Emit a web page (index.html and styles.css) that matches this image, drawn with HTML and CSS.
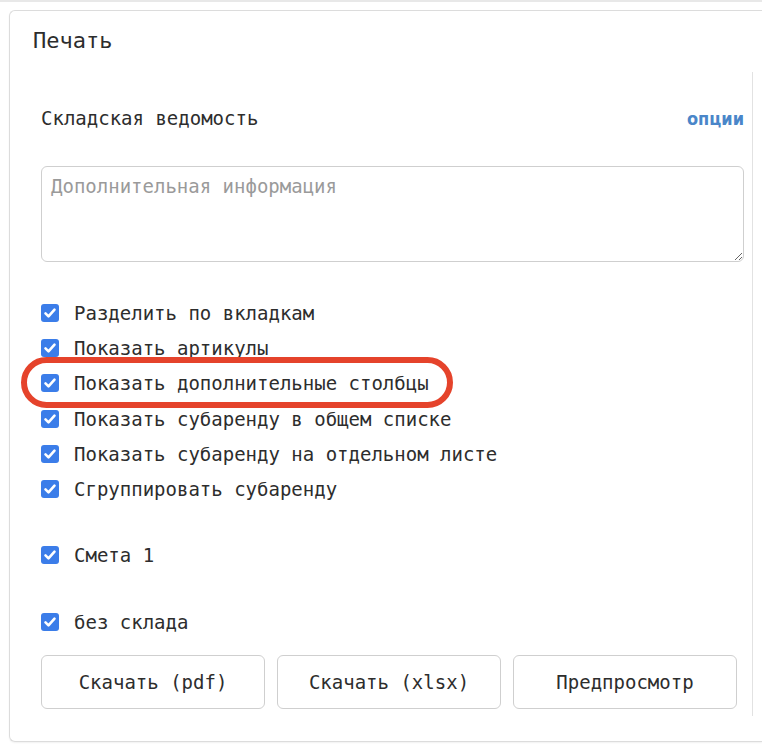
FILE: index.html
```html
<!DOCTYPE html>
<html lang="ru">
<head>
<meta charset="utf-8">
<link rel="stylesheet" href="styles.css">
</head>
<body>
<div class="prev"></div>
<section class="card">
  <h2 class="card-title">Печать</h2>
  <div class="col">
    <div class="doc-head">
      <span class="doc-name">Складская ведомость</span>
      <a class="opts">опции</a>
    </div>
    <textarea class="info" placeholder="Дополнительная информация"></textarea>
    <ul class="checks">
      <li><span class="cb"><svg viewBox="0 0 18 18"><path d="M4.5 9.3l3 3 6-6.6" /></svg></span>Разделить по вкладкам</li>
      <li><span class="cb"><svg viewBox="0 0 18 18"><path d="M4.5 9.3l3 3 6-6.6" /></svg></span>Показать артикулы</li>
      <li><span class="cb"><svg viewBox="0 0 18 18"><path d="M4.5 9.3l3 3 6-6.6" /></svg></span>Показать дополнительные столбцы</li>
      <li><span class="cb"><svg viewBox="0 0 18 18"><path d="M4.5 9.3l3 3 6-6.6" /></svg></span>Показать субаренду в общем списке</li>
      <li><span class="cb"><svg viewBox="0 0 18 18"><path d="M4.5 9.3l3 3 6-6.6" /></svg></span>Показать субаренду на отдельном листе</li>
      <li><span class="cb"><svg viewBox="0 0 18 18"><path d="M4.5 9.3l3 3 6-6.6" /></svg></span>Сгруппировать субаренду</li>
    </ul>
    <ul class="checks single">
      <li><span class="cb"><svg viewBox="0 0 18 18"><path d="M4.5 9.3l3 3 6-6.6" /></svg></span>Смета 1</li>
    </ul>
    <ul class="checks single">
      <li><span class="cb"><svg viewBox="0 0 18 18"><path d="M4.5 9.3l3 3 6-6.6" /></svg></span>без склада</li>
    </ul>
    <div class="buttons">
      <button class="btn">Скачать (pdf)</button>
      <button class="btn">Скачать (xlsx)</button>
      <button class="btn">Предпросмотр</button>
    </div>
  </div>
  <div class="highlight"></div>
</section>
</body>
</html>
```
FILE: styles.css
```css
html, body {
  margin: 0;
  padding: 0;
  background: #fff;
  overflow: hidden;
}
body {
  font-family: "DejaVu Sans Mono", "Liberation Mono", monospace;
  color: #2d2d2d;
  width: 762px;
  height: 751px;
}
.prev {
  height: 2px;
  background: #e8e8e8;
}
.card {
  position: relative;
  box-sizing: border-box;
  margin: 8px 0 0 9px;
  width: 753px;
  height: 732px;
  border: 1px solid #dcdcdc;
  border-right: none;
  border-radius: 6px 0 0 6px;
  box-shadow: 0 1px 2px rgba(0,0,0,0.06);
}
.card-title {
  margin: 0 0 17px;
  padding: 16px 0 0 23px;
  font-size: 22px;
  font-weight: normal;
  line-height: 28px;
}
.col {
  box-sizing: border-box;
  margin-left: 31px;
  width: 712px;
  height: 644px;
  border-right: 1px solid #e2e2e2;
  padding: 32px 8px 0 0;
}
.doc-head {
  display: flex;
  justify-content: space-between;
  align-items: center;
  height: 28px;
  font-size: 19px;
}
.opts {
  color: #4a86c9;
  font-weight: bold;
  font-size: 18px;
  font-family: "DejaVu Sans Condensed", "DejaVu Sans", sans-serif;
}
.info {
  display: block;
  box-sizing: border-box;
  margin-top: 34px;
  width: 703px;
  height: 96px;
  border: 1px solid #cfcfcf;
  border-radius: 6px;
  padding: 8px 9px;
  font-family: inherit;
  font-size: 19px;
  color: #2d2d2d;
  outline: none;
}
.info::placeholder {
  color: #9a9a9a;
}
.checks {
  list-style: none;
  margin: 33px 0 0;
  padding: 0;
  font-size: 19px;
}
.checks li {
  display: flex;
  align-items: center;
  height: 35.3px;
}
.checks.single {
  margin-top: 31px;
}
.cb {
  box-sizing: border-box;
  width: 18px;
  height: 18px;
  margin: 0 15px 0 0;
  border-radius: 3px;
  background: #3b7de9;
  display: inline-flex;
  flex: none;
}
.cb svg {
  width: 18px;
  height: 18px;
  fill: none;
  stroke: #fff;
  stroke-width: 2.6;
  stroke-linecap: round;
  stroke-linejoin: round;
}
.buttons {
  display: flex;
  gap: 12px;
  margin-top: 16px;
}
.btn {
  box-sizing: border-box;
  width: 224px;
  height: 54px;
  background: #fff;
  border: 1px solid #cfcfcf;
  border-radius: 6px;
  font-family: inherit;
  font-size: 19px;
  color: #2d2d2d;
  padding: 0;
}
.highlight {
  position: absolute;
  left: 11px;
  top: 346px;
  width: 432px;
  height: 51px;
  box-sizing: border-box;
  border: 6px solid #e5432b;
  border-radius: 26px;
}
```
